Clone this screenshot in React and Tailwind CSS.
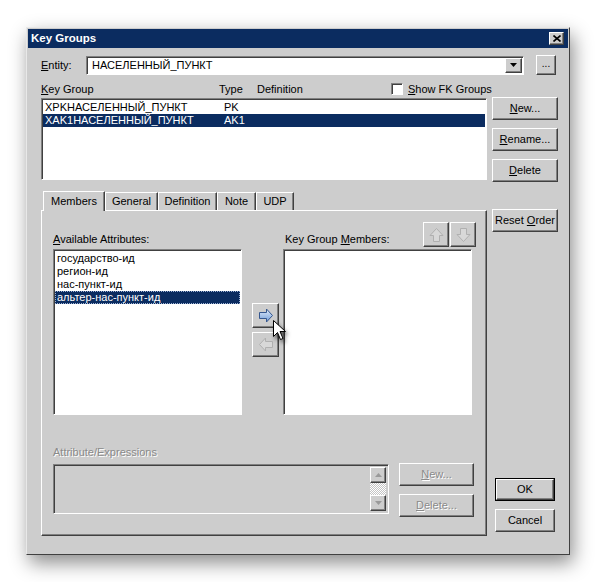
import React from 'react';

const raised = 'border border-t-white border-l-white border-r-[#404040] border-b-[#404040] shadow-[inset_-1px_-1px_0_#808080]';
const sunken = 'border border-t-[#808080] border-l-[#808080] border-r-white border-b-white shadow-[inset_1px_1px_0_#404040]';
const disabledText = 'text-[#8a8a8a] [text-shadow:1px_1px_0_#ffffff]';

function Btn({ children, className = '' }) {
  return (
    <div className={`flex items-center justify-center bg-[#cdcdcd] ${raised} ${className}`}>
      {children}
    </div>
  );
}

function ArrowRight({ disabled }) {
  return (
    <svg width="16" height="15" viewBox="0 0 16 15">
      <defs>
        <linearGradient id="ar" x1="0" y1="0" x2="0" y2="1">
          <stop offset="0" stopColor="#e4eefb" />
          <stop offset="1" stopColor="#6f9bd8" />
        </linearGradient>
      </defs>
      <path
        d="M1.5 4.5H8.5V1L14.5 7.5L8.5 14V10.5H1.5Z"
        fill={disabled ? '#d6d6d6' : 'url(#ar)'}
        stroke={disabled ? '#a8a8a8' : '#35578f'}
      />
    </svg>
  );
}

function ArrowLeft() {
  return (
    <svg width="16" height="15" viewBox="0 0 16 15">
      <path d="M14.5 4.5H7.5V1L1.5 7.5L7.5 14V10.5H14.5Z" fill="#d8d8d8" stroke="#b0b0b0" />
    </svg>
  );
}

function ArrowUp() {
  return (
    <svg width="15" height="16" viewBox="0 0 15 16">
      <path d="M4.5 14.5V8.5H1L7.5 1.5L14 8.5H10.5V14.5Z" fill="#d8d8d8" stroke="#b0b0b0" />
    </svg>
  );
}

function ArrowDown() {
  return (
    <svg width="15" height="16" viewBox="0 0 15 16">
      <path d="M4.5 1.5V7.5H1L7.5 14.5L14 7.5H10.5V1.5Z" fill="#d8d8d8" stroke="#b0b0b0" />
    </svg>
  );
}

export default function App() {
  const attrs = ['государство-ид', 'регион-ид', 'нас-пункт-ид', 'альтер-нас-пункт-ид'];
  const tabs = [
    { name: 'General', w: 'w-[53px]' },
    { name: 'Definition', w: 'w-[59px]' },
    { name: 'Note', w: 'w-[39px]' },
    { name: 'UDP', w: 'w-[38px]' },
  ];

  return (
    <div className="relative w-[597px] h-[582px] bg-white pt-[27px] pl-[26px] font-['Liberation_Sans',Arial,sans-serif] text-[11px] leading-none text-black">
      <div className="w-[544px] h-[528px] bg-[#cdcdcd] border border-t-[#e8e8e8] border-l-[#e8e8e8] border-r-[#404040] border-b-[#404040] shadow-[3px_8px_18px_rgba(0,0,0,0.45)] p-px">
        {/* title bar */}
        <div className="h-[19px] bg-[#0b2c60] flex items-center justify-between pl-[3px] pr-[4px]">
          <span className="text-white font-bold text-[11.5px]">Key Groups</span>
          <div className={`w-[15px] h-[13px] bg-[#cdcdcd] ${raised} flex items-center justify-center`}>
            <svg width="8" height="7" viewBox="0 0 8 7">
              <path d="M0.5 0.5L7.5 6.5M7.5 0.5L0.5 6.5" stroke="#000" strokeWidth="1.6" />
            </svg>
          </div>
        </div>

        <div className="pl-[13px]">
          {/* entity row */}
          <div className="mt-[7px] h-[20px] flex items-center">
            <span className="w-[45px]">
              <span className="underline">E</span>ntity:
            </span>
            <div className={`w-[438px] h-[19px] bg-white ${sunken} flex items-center justify-between pl-[5px] pr-[1px]`}>
              <span>НАСЕЛЕННЫЙ_ПУНКТ</span>
              <div className={`w-[17px] h-[15px] bg-[#cdcdcd] ${raised} flex items-center justify-center`}>
                <svg width="7" height="4" viewBox="0 0 7 4">
                  <path d="M0 0H7L3.5 4Z" fill="#000" />
                </svg>
              </div>
            </div>
            <Btn className="ml-[12px] w-[20px] h-[20px] text-[10px] pb-[3px]">...</Btn>
          </div>

          <div className="flex mt-[8px]">
            {/* left column */}
            <div className="w-[446px]">
              <div className="h-[15px] flex items-start whitespace-nowrap">
                <span className="w-[178px] shrink-0 pt-[1px]">
                  <span className="underline">K</span>ey Group
                </span>
                <span className="w-[38px] shrink-0 pt-[1px]">Type</span>
                <span className="w-[134px] shrink-0 pt-[1px]">Definition</span>
                <div className={`w-[12px] h-[12px] shrink-0 bg-white ${sunken}`}></div>
                <span className="ml-[5px] pt-[1px]">
                  <span className="underline">S</span>how FK Groups
                </span>
              </div>
              <div className={`h-[82px] bg-white ${sunken} pt-[2px] px-[1px]`}>
                <div className="h-[13px] flex items-center pl-[2px]">
                  <span className="w-[179px]">XPKНАСЕЛЕННЫЙ_ПУНКТ</span>
                  <span>PK</span>
                </div>
                <div className="h-[13px] flex items-center pl-[2px] bg-[#0b2c60] text-white">
                  <span className="w-[179px]">XAK1НАСЕЛЕННЫЙ_ПУНКТ</span>
                  <span>AK1</span>
                </div>
              </div>

              {/* tabs */}
              <div className="mt-[10px] h-[20px] flex items-end pl-[2px]">
                <div className="relative z-10 w-[62px] h-[20px] -mb-px bg-[#cdcdcd] border-t border-l border-t-white border-l-white border-r border-r-[#404040] shadow-[inset_-1px_0_0_#808080] flex items-center justify-center pb-[1px]">
                  Members
                </div>
                {tabs.map((t) => (
                  <div
                    key={t.name}
                    className={`${t.w} h-[18px] bg-[#cdcdcd] border-t border-l border-t-white border-l-white border-r border-r-[#404040] shadow-[inset_-1px_0_0_#808080] flex items-center justify-center`}
                  >
                    {t.name}
                  </div>
                ))}
              </div>

              {/* tab panel */}
              <div className={`h-[326px] ${raised} pt-[11px] pl-[11px]`}>
                <div className="grid grid-cols-[189px_41px_189px] w-[419px]">
                  <div className="h-[27px] flex items-end pb-[4px]">
                    <span>
                      <span className="underline">A</span>vailable Attributes:
                    </span>
                  </div>
                  <div></div>
                  <div className="h-[27px] flex justify-between">
                    <span className="self-end pb-[4px] pl-[2px]">
                      Key Group <span className="underline">M</span>embers:
                    </span>
                    <div className="flex -mr-[4px] mt-0">
                      <Btn className="w-[26px] h-[25px]">
                        <ArrowUp />
                      </Btn>
                      <Btn className="w-[26px] h-[25px] ml-px">
                        <ArrowDown />
                      </Btn>
                    </div>
                  </div>

                  <div className={`h-[166px] bg-white ${sunken} pt-[2px] px-[1px]`}>
                    {attrs.map((a, i) => (
                      <div
                        key={a}
                        className={`h-[13px] flex items-center pl-[2px] ${
                          i === 3 ? 'bg-[#0b2c60] text-white outline outline-1 outline-dotted outline-[#9fb3d6] -outline-offset-1' : ''
                        }`}
                      >
                        {a}
                      </div>
                    ))}
                  </div>
                  <div className="pt-[54px] pl-[10px] flex flex-col gap-[4px]">
                    <Btn className="w-[27px] h-[25px]">
                      <ArrowRight />
                    </Btn>
                    <Btn className="w-[27px] h-[25px]">
                      <ArrowLeft />
                    </Btn>
                  </div>
                  <div className={`h-[166px] bg-white ${sunken}`}></div>
                </div>

                <div className={`mt-[32px] ${disabledText}`}>Attribute/Expressions</div>

                <div className="flex mt-[6px]">
                  <div className={`w-[336px] h-[50px] bg-[#cdcdcd] ${sunken} flex justify-end p-[2px]`}>
                    <div className="w-[16px] flex flex-col">
                      <Btn className="w-[16px] h-[16px]">
                        <svg width="7" height="4" viewBox="0 0 7 4">
                          <path d="M0 4H7L3.5 0Z" fill="#9a9a9a" />
                        </svg>
                      </Btn>
                      <div className="flex-1 bg-[repeating-conic-gradient(#ffffff_0%_25%,#c4c4c4_0%_50%)] bg-[length:2px_2px]"></div>
                      <Btn className="w-[16px] h-[16px]">
                        <svg width="7" height="4" viewBox="0 0 7 4">
                          <path d="M0 0H7L3.5 4Z" fill="#9a9a9a" />
                        </svg>
                      </Btn>
                    </div>
                  </div>
                  <div className="ml-[10px] -mt-px flex flex-col gap-[8px]">
                    <Btn className={`w-[75px] h-[23px] ${disabledText}`}>
                      <span>
                        <span className="underline">N</span>ew...
                      </span>
                    </Btn>
                    <Btn className={`w-[75px] h-[23px] ${disabledText}`}>
                      <span>
                        <span className="underline">D</span>elete...
                      </span>
                    </Btn>
                  </div>
                </div>
              </div>
            </div>

            {/* right column */}
            <div className="ml-[5px] w-[66px] flex flex-col">
              <Btn className="mt-[14px] h-[23px]">
                <span>
                  <span className="underline">N</span>ew...
                </span>
              </Btn>
              <Btn className="mt-[8px] h-[23px]">
                <span>
                  <span className="underline">R</span>ename...
                </span>
              </Btn>
              <Btn className="mt-[8px] h-[23px]">
                <span>
                  <span className="underline">D</span>elete
                </span>
              </Btn>
              <Btn className="mt-[27px] h-[23px]">
                <span>
                  Reset <span className="underline">O</span>rder
                </span>
              </Btn>
              <div className="mt-[246px] ml-[3px] w-[60px] h-[23px] border border-black">
                <Btn className="w-full h-full">OK</Btn>
              </div>
              <Btn className="mt-[8px] ml-[3px] w-[60px] h-[23px]">Cancel</Btn>
            </div>
          </div>
        </div>
      </div>

      {/* mouse cursor */}
      <svg className="absolute left-[273px] top-[320px] drop-shadow-[2px_3px_2px_rgba(0,0,0,0.6)]" width="13" height="21" viewBox="0 0 13 21">
        <path d="M0.5 0.5V16.5L4.5 12.5L7.5 19.5L10 18.5L7 11.5H12.5Z" fill="#ffffff" stroke="#000000" strokeLinejoin="round" />
      </svg>
    </div>
  );
}
